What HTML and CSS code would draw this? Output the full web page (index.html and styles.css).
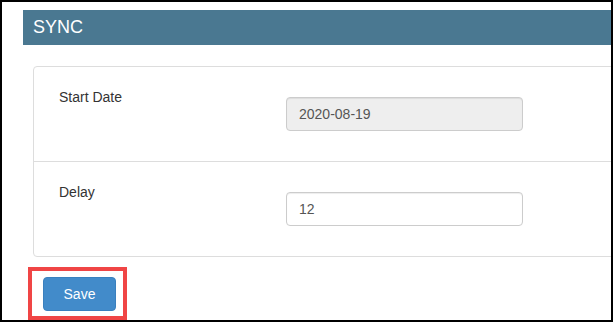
FILE: index.html
```html
<!DOCTYPE html>
<html>
<head>
<meta charset="utf-8">
<link rel="stylesheet" href="styles.css">
</head>
<body>
<div class="frame">
  <div class="header">SYNC</div>
  <div class="card">
    <div class="row">
      <div class="label">Start Date</div>
      <div class="field"><input class="control" type="text" value="2020-08-19" disabled></div>
    </div>
    <div class="row">
      <div class="label">Delay</div>
      <div class="field"><input class="control" type="text" value="12"></div>
    </div>
  </div>
  <div class="actions">
    <div class="highlight"><button class="btn">Save</button></div>
  </div>
</div>
</body>
</html>
```
FILE: styles.css
```css
html, body {
  margin: 0;
  padding: 0;
  background: #fff;
}
.frame {
  width: 613px;
  height: 322px;
  box-sizing: border-box;
  border: 2px solid #000;
  overflow: hidden;
  padding: 8px 0 0 21px;
  font-family: "Liberation Sans", Arial, sans-serif;
  font-size: 14px;
  color: #333;
}
.header {
  height: 35px;
  line-height: 35px;
  background: #4a7891;
  color: #fff;
  font-size: 18px;
  padding-left: 10px;
}
.card {
  margin: 21px -40px 0 10px;
  border: 1px solid #ddd;
  border-radius: 4px;
}
.row {
  display: grid;
  grid-template-columns: 252px 237px;
  height: 94px;
}
.row + .row {
  border-top: 1px solid #ddd;
}
.label {
  padding: 20px 0 0 25px;
  line-height: 20px;
}
.field {
  padding-top: 30px;
}
.control {
  display: block;
  box-sizing: border-box;
  width: 237px;
  height: 34px;
  padding: 6px 12px;
  border: 1px solid #ccc;
  border-radius: 4px;
  background: #fff;
  font-family: "Liberation Sans", Arial, sans-serif;
  font-size: 14px;
  color: #555;
  box-shadow: inset 0 1px 1px rgba(0,0,0,0.075);
  margin: 0;
}
.control:disabled {
  background: #eee;
  color: #555;
  opacity: 1;
}
.actions {
  margin: 10px 0 0 5px;
}
.highlight {
  display: inline-block;
  border: 4px solid #f04545;
  padding: 6px 7px 5px 11px;
}
.btn {
  display: block;
  width: 73px;
  height: 34px;
  padding: 0;
  margin: 0;
  border: 1px solid #3a80be;
  border-radius: 4px;
  background: #428bca;
  color: #fff;
  font-family: "Liberation Sans", Arial, sans-serif;
  font-size: 14px;
  line-height: 32px;
}
```
